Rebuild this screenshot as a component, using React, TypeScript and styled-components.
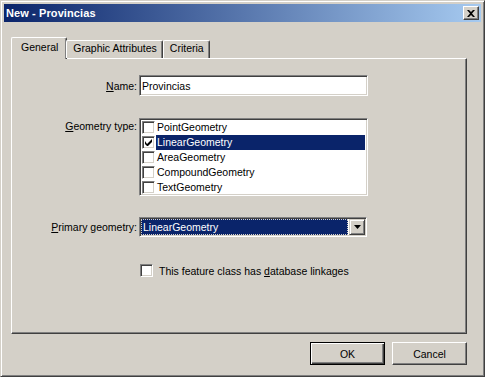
import React from "react";
import styled, { createGlobalStyle } from "styled-components";

const GlobalStyle = createGlobalStyle`
  html, body {
    margin: 0;
    padding: 0;
    background: #d4d0c8;
  }
  body {
    font-family: "Liberation Sans", Arial, sans-serif;
    font-size: 10.5px;
    color: #000;
  }
`;

const sunken = `
  border-top: 1px solid #808080;
  border-left: 1px solid #808080;
  border-right: 1px solid #ffffff;
  border-bottom: 1px solid #ffffff;
  box-shadow: inset 1px 1px 0 #404040, inset -1px -1px 0 #d4d0c8;
`;

const Window = styled.div`
  box-sizing: border-box;
  width: 485px;
  height: 377px;
  background: #d4d0c8;
  border-top: 1px solid #d4d0c8;
  border-left: 1px solid #d4d0c8;
  border-right: 1px solid #404040;
  border-bottom: 1px solid #404040;
  box-shadow: inset 1px 1px 0 #ffffff, inset -1px -1px 0 #808080;
  padding: 3px;
  display: flex;
  flex-direction: column;
`;

const TitleBar = styled.div`
  height: 18px;
  background: linear-gradient(to right, #0a246a, #a6caf0);
  display: flex;
  align-items: center;
  justify-content: space-between;
  padding: 0 2px 0 2px;
`;

const Title = styled.span`
  color: #fff;
  font-weight: bold;
  font-size: 11px;
  letter-spacing: 0.1px;
`;

const CloseButton = styled.div`
  box-sizing: border-box;
  width: 16px;
  height: 14px;
  background: #d4d0c8;
  border-top: 1px solid #ffffff;
  border-left: 1px solid #ffffff;
  border-right: 1px solid #404040;
  border-bottom: 1px solid #404040;
  box-shadow: inset -1px -1px 0 #808080;
  display: flex;
  align-items: center;
  justify-content: center;
`;

const Body = styled.div`
  flex: 1;
  display: flex;
  flex-direction: column;
  padding: 15px 14px 0 7px;
`;

const TabRow = styled.div`
  display: flex;
  align-items: flex-end;
  height: 21px;
  padding-left: 1px;
  position: relative;
  z-index: 1;
`;

const Tab = styled.div<{ $active?: boolean }>`
  box-sizing: border-box;
  height: ${(p) => (p.$active ? 22 : 18)}px;
  margin: 0 ${(p) => (p.$active ? "-1px" : "0")} ${(p) => (p.$active ? "-1px" : "0")} ${(p) => (p.$active ? "-1px" : "0")};
  padding: ${(p) => (p.$active ? "3px 8px 0 9px" : "1px 5px 0 6px")};
  background: #d4d0c8;
  border-top: 1px solid #ffffff;
  border-left: 1px solid #ffffff;
  border-right: 1px solid #404040;
  box-shadow: inset -1px 0 0 #808080;
  border-radius: 2px 2px 0 0;
  white-space: nowrap;
`;

const Panel = styled.div`
  box-sizing: border-box;
  height: 276px;
  background: #d4d0c8;
  border-top: 1px solid #ffffff;
  border-left: 1px solid #ffffff;
  border-right: 1px solid #404040;
  border-bottom: 1px solid #404040;
  box-shadow: inset -1px -1px 0 #808080;
  padding: 16px 0 0 0;
  display: flex;
  flex-direction: column;
`;

const FieldRow = styled.div<{ $top?: number; $align?: string }>`
  display: flex;
  align-items: ${(p) => p.$align || "center"};
  margin-top: ${(p) => p.$top || 0}px;
`;

const Label = styled.div<{ $pad?: number }>`
  width: 125px;
  text-align: right;
  padding-right: 2px;
  padding-top: ${(p) => p.$pad || 0}px;
  white-space: nowrap;
`;

const TextInput = styled.div`
  box-sizing: border-box;
  width: 229px;
  height: 21px;
  background: #fff;
  ${sunken}
  padding: 2px 2px;
  display: flex;
  align-items: center;
`;

const ListBox = styled.div`
  box-sizing: border-box;
  width: 229px;
  height: 78px;
  background: #fff;
  ${sunken}
  padding: 1px 2px 0 2px;
`;

const ListItem = styled.div`
  height: 15px;
  display: flex;
  align-items: center;
`;

const Box = styled.div`
  box-sizing: border-box;
  width: 13px;
  height: 13px;
  background: #fff;
  ${sunken}
  display: flex;
  align-items: center;
  justify-content: center;
  flex-shrink: 0;
`;

const ItemText = styled.span<{ $selected?: boolean }>`
  flex: 1;
  margin-left: 1px;
  padding-left: 1px;
  height: 15px;
  line-height: 15px;
  background: ${(p) => (p.$selected ? "#0a246a" : "transparent")};
  color: ${(p) => (p.$selected ? "#fff" : "#000")};
`;

const Combo = styled.div`
  box-sizing: border-box;
  width: 228px;
  height: 20px;
  background: #fff;
  ${sunken}
  display: flex;
  align-items: stretch;
  padding: 1px;
`;

const ComboValue = styled.div`
  flex: 1;
  background: #0a246a;
  color: #fff;
  outline: 1px dotted #d4d0c8;
  outline-offset: -1px;
  padding-left: 2px;
  display: flex;
  align-items: center;
  margin-right: 1px;
`;

const ComboButton = styled.div`
  box-sizing: border-box;
  width: 16px;
  background: #d4d0c8;
  border-top: 1px solid #d4d0c8;
  border-left: 1px solid #d4d0c8;
  border-right: 1px solid #404040;
  border-bottom: 1px solid #404040;
  box-shadow: inset 1px 1px 0 #ffffff, inset -1px -1px 0 #808080;
  display: flex;
  align-items: center;
  justify-content: center;
`;

const CheckRow = styled.div`
  display: flex;
  align-items: center;
  margin-top: 27px;
  padding-left: 128px;
  gap: 6px;
`;

const Footer = styled.div`
  display: flex;
  justify-content: flex-end;
  gap: 7px;
  padding: 8px 0 0 0;
`;

const Button = styled.div<{ $default?: boolean }>`
  box-sizing: border-box;
  width: 75px;
  height: 23px;
  background: #d4d0c8;
  display: flex;
  align-items: center;
  justify-content: center;
  ${(p) =>
    p.$default
      ? `border: 1px solid #000;
         box-shadow: inset 1px 1px 0 #ffffff, inset -1px -1px 0 #404040, inset -2px -2px 0 #808080;`
      : `border-top: 1px solid #ffffff;
         border-left: 1px solid #ffffff;
         border-right: 1px solid #404040;
         border-bottom: 1px solid #404040;
         box-shadow: inset -1px -1px 0 #808080;`}
`;

const U = styled.span`
  text-decoration: underline;
`;

const Check = () => (
  <svg width="7" height="7" viewBox="0 0 7 7">
    <path d="M0 2v3l2 2h1l4-4V0L2 5z" fill="#000" />
  </svg>
);

const items = [
  { name: "PointGeometry", checked: false },
  { name: "LinearGeometry", checked: true },
  { name: "AreaGeometry", checked: false },
  { name: "CompoundGeometry", checked: false },
  { name: "TextGeometry", checked: false },
];

export default function App() {
  return (
    <>
      <GlobalStyle />
      <Window>
        <TitleBar>
          <Title>New - Provincias</Title>
          <CloseButton>
            <svg width="8" height="7" viewBox="0 0 8 7">
              <path d="M0 0h2l2 2 2-2h2L5 3.5 8 7H6L4 5 2 7H0l3-3.5z" fill="#000" />
            </svg>
          </CloseButton>
        </TitleBar>
        <Body>
          <TabRow>
            <Tab $active>General</Tab>
            <Tab>Graphic Attributes</Tab>
            <Tab>Criteria</Tab>
          </TabRow>
          <Panel>
            <FieldRow>
              <Label>
                <U>N</U>ame:
              </Label>
              <TextInput>Provincias</TextInput>
            </FieldRow>
            <FieldRow $top={22} $align="flex-start">
              <Label $pad={2}>
                <U>G</U>eometry type:
              </Label>
              <ListBox>
                {items.map((it) => (
                  <ListItem key={it.name}>
                    <Box>{it.checked && <Check />}</Box>
                    <ItemText $selected={it.checked}>{it.name}</ItemText>
                  </ListItem>
                ))}
              </ListBox>
            </FieldRow>
            <FieldRow $top={21}>
              <Label>
                <U>P</U>rimary geometry:
              </Label>
              <Combo>
                <ComboValue>LinearGeometry</ComboValue>
                <ComboButton>
                  <svg width="7" height="4" viewBox="0 0 7 4">
                    <path d="M0 0h7L3.5 4z" fill="#000" />
                  </svg>
                </ComboButton>
              </Combo>
            </FieldRow>
            <CheckRow>
              <Box />
              <span>
                This feature class has <U>d</U>atabase linkages
              </span>
            </CheckRow>
          </Panel>
          <Footer>
            <Button $default>OK</Button>
            <Button>Cancel</Button>
          </Footer>
        </Body>
      </Window>
    </>
  );
}
